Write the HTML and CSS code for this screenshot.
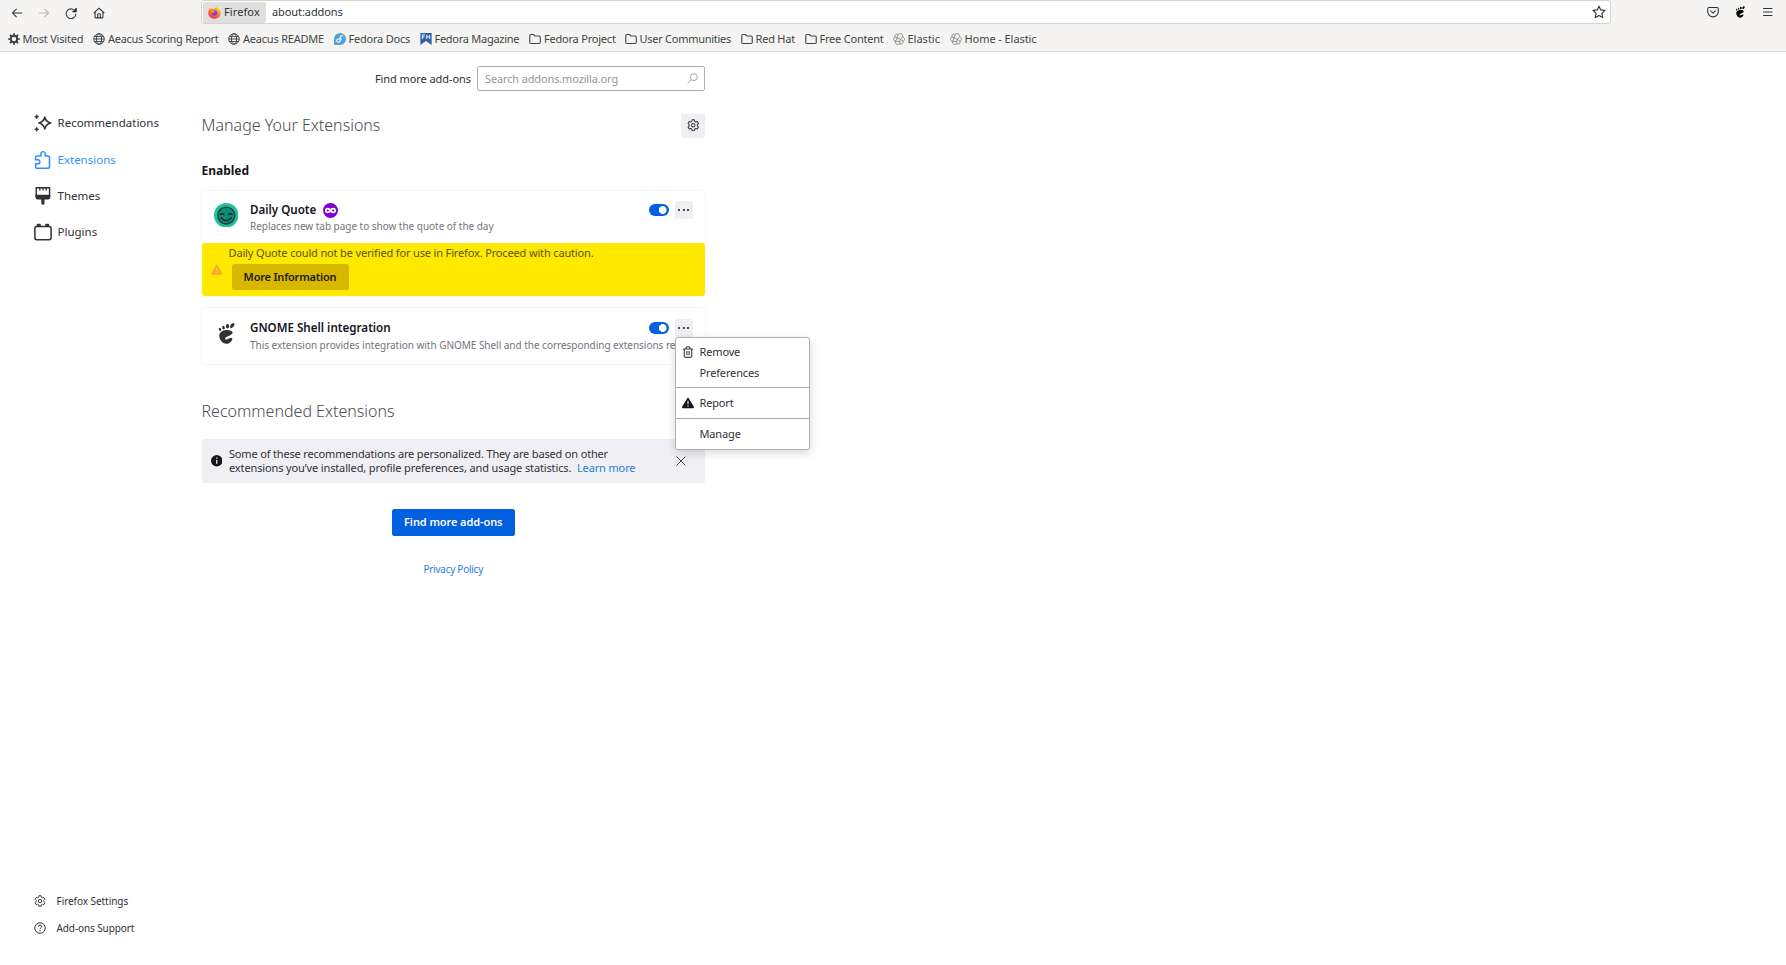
FILE: index.html
```html
<!DOCTYPE html>
<html lang="en">
<head>
<meta charset="utf-8">
<title>Add-ons Manager</title>
<link rel="stylesheet" href="styles.css">
</head>
<body>
<svg class="defs" width="0" height="0" aria-hidden="true">
  <symbol id="globe" viewBox="0 0 16 16"><g fill="none" stroke="currentColor" stroke-width="1.300"><circle cx="8" cy="8" r="7"/><ellipse cx="8" cy="8" rx="3.400" ry="7"/><path d="M1 8h14M2 4.600h12M2 11.400h12"/></g></symbol>
  <symbol id="folder" viewBox="0 0 16 16"><path d="M1 12.500v-9A1.500 1.500 0 0 1 2.500 2H6l2 2h5.500A1.500 1.500 0 0 1 15 5.500v7a1.500 1.500 0 0 1-1.500 1.500h-11A1.500 1.500 0 0 1 1 12.500z" fill="none" stroke="currentColor" stroke-width="1.500"/></symbol>
  <symbol id="elastic" viewBox="0 0 16 16"><g fill="none" stroke="currentColor" stroke-width="1"><path d="M2.700 5.400C1.900 2.200 4.600.4 6.800 2c2.700-2.500 6.600-.7 6.100 3.100 3 1.100 3.300 4.900.4 5.800.9 3.100-1.900 4.800-4.100 3.300-2.700 2.400-6.600.6-6.100-3.200C.2 9.900-.1 6.300 2.700 5.400z"/><path d="M6.800 2L5.900 6.600l3.900 1.900 3.100-3.400M2.700 5.400l3.200 1.200-2.800 4.400 6.100.2.600-2.700 3.500 2.400M9.200 11.200v3"/></g></symbol>
  <symbol id="gear" viewBox="0 0 16 16"><g fill="none" stroke="currentColor" stroke-width="1.300" stroke-linejoin="round"><path d="M6.600 1h2.800l.5 2 1.300.8 2-.6 1.500 2.500-1.500 1.500v1.600l1.500 1.500-1.500 2.500-2-.6-1.300.8-.5 2H6.600l-.5-2-1.300-.8-2 .6-1.500-2.500 1.500-1.500V7.200L1.300 5.700l1.500-2.500 2 .6L6.100 3z"/><circle cx="8" cy="8" r="2.200"/></g></symbol>
  <symbol id="foot" viewBox="0 0 18 21"><g fill="currentColor"><path d="M16.200.3c-3.300 0-3.900 5-2.100 5S19.400.3 16.200.3z"/><ellipse cx="10.500" cy="3.200" rx="1.600" ry="2.200" transform="rotate(12 10.500 3.200)"/><ellipse cx="6.500" cy="4.600" rx="1.300" ry="1.800" transform="rotate(-8 6.500 4.600)"/><ellipse cx="3" cy="6.400" rx="1.200" ry="1.600" transform="rotate(-24 3 6.400)"/><path d="M15.600 9.500c-.4-3.700-13.600-3.600-13.300 3.300.1 4.600 3.600 8 7.200 8 2.700 0 5.500-2.400 5.800-4.800.3-1.900-3.300-.9-4.500-.1-1.500 1-2.300.8-2.600 0-.8-2.300 7.800-3.600 7.400-6.400z"/></g></symbol>
  <symbol id="alert" viewBox="0 0 16 16"><path d="M7 1.600a1.200 1.200 0 0 1 2 0l6.800 11.500A1.200 1.200 0 0 1 14.800 15H1.200a1.200 1.200 0 0 1-1-1.900z" fill="currentColor"/><path d="M8 5v5M8 11.500V13" stroke="var(--mark)" stroke-width="1.300"/></symbol>
</svg>

<header class="chrome">
  <div class="toolbar">
    <div class="nav-buttons">
      <svg class="tool" viewBox="0 0 16 16"><path d="M15 8H2M7.500 2.500L2 8l5.500 5.500"/></svg>
      <svg class="tool dim" viewBox="0 0 16 16"><path d="M1 8h13M8.500 2.500L14 8l-5.500 5.500"/></svg>
      <svg class="tool" viewBox="0 0 16 16"><path d="M14 6.500A6.500 6.500 0 1 0 14.500 9M10 6h4.700V1.300"/><path d="M11 6.200h3.700V2.500z" fill="currentColor"/></svg>
      <svg class="tool" viewBox="0 0 16 16"><path d="M1 8l7-6.500L15 8M2.800 7v6.500A1 1 0 0 0 3.800 14.500h8.400a1 1 0 0 0 1-1V7M6.300 14.500V10a1 1 0 0 1 1-1h1.400a1 1 0 0 1 1 1v4.500"/></svg>
    </div>
    <div class="urlbar">
      <div class="identity">
        <svg class="fox" viewBox="0 0 16 16">
          <defs><linearGradient id="flame" x1=".8" y1="0" x2=".2" y2="1"><stop offset="0" stop-color="#ffd83a"/><stop offset=".45" stop-color="#ff8a1f"/><stop offset="1" stop-color="#f5215f"/></linearGradient></defs>
          <path d="M10 .3c1.500 1 2 2 2.300 3C13.800 4 15.800 6 15.700 9c-.2 4-3.500 6.800-7.700 6.800S.4 12.800.3 8.700C.2 6 1.200 4 2.600 2.600L3.400 4l1.200-1.700.9 1.500C7.500 3.500 9 2.500 10 .3z" fill="url(#flame)"/>
          <circle cx="8.200" cy="8.500" r="3.200" fill="#7a3fe0"/><path d="M4 6.500c2-1.500 4-.5 5 .8-1.500 0-2 .5-2.200 1.400C5.500 8.500 4.500 8 4 6.500z" fill="#ff9a2a"/>
        </svg>
        <span>Firefox</span>
      </div>
      <span class="url">about:addons</span>
      <svg class="star" viewBox="0 0 16 16"><path d="M8 1.300l2 4.300 4.800.6-3.500 3.300.9 4.700L8 11.900l-4.200 2.300.9-4.700L1.200 6.200 6 5.600z"/></svg>
    </div>
    <div class="tool-actions">
      <svg class="tool" viewBox="0 0 16 16"><path d="M2.500 2h11A1.500 1.500 0 0 1 15 3.500V7.500a7 7 0 0 1-14 0v-4A1.500 1.500 0 0 1 2.500 2zM4.500 6.200L8 9.500l3.500-3.300"/></svg>
      <svg class="tool-foot"><use href="#foot"/></svg>
      <svg class="tool menu-lines" viewBox="0 0 16 16"><path d="M1.500 3h13M1.500 8h13M1.500 13h13"/></svg>
    </div>
  </div>
  <nav class="bookmarks">
    <a class="w-visited"><svg viewBox="0 0 16 16"><circle cx="8" cy="8" r="4.200" fill="none" stroke="#2e3436" stroke-width="2.200"/><path d="M8 .3v3M8 12.700v3M.3 8h3M12.700 8h3M2.600 2.600l2 2M11.400 11.400l2 2M13.400 2.600l-2 2M4.600 11.400l-2 2" stroke="#2e3436" stroke-width="2.200"/></svg>Most Visited</a>
    <a class="w-report"><svg><use href="#globe"/></svg>Aeacus Scoring Report</a>
    <a class="w-readme"><svg><use href="#globe"/></svg>Aeacus README</a>
    <a class="w-docs"><svg viewBox="0 0 16 16"><path d="M8 0a8 8 0 1 1 0 16H1.500A1.500 1.500 0 0 1 0 14.500V8a8 8 0 0 1 8-8z" fill="#51a2da"/><path d="M12 4c-2-1-3.800.2-3.800 2v4.200c0 3-4.600 2.600-4.600-.2 0-1.200 1-2 2.200-2h4.700" fill="none" stroke="#fff" stroke-width="1.400"/></svg>Fedora Docs</a>
    <a class="w-magazine"><svg viewBox="0 0 16 16"><path d="M.5 0h15v16L8 10.500.5 16z" fill="#2f5fae"/><path d="M3.200 8V2.500h3.300M3.200 5.200h2.800M9 8V2.500M12.800 8V2.500M9 5.200h3.800" fill="none" stroke="#fff" stroke-width="1.200"/></svg>Fedora Magazine</a>
    <a class="w-project"><svg><use href="#folder"/></svg>Fedora Project</a>
    <a class="w-communities"><svg><use href="#folder"/></svg>User Communities</a>
    <a class="w-redhat"><svg><use href="#folder"/></svg>Red Hat</a>
    <a class="w-content"><svg><use href="#folder"/></svg>Free Content</a>
    <a class="w-elastic"><svg class="soft"><use href="#elastic"/></svg>Elastic</a>
    <a class="w-home"><svg class="soft"><use href="#elastic"/></svg>Home - Elastic</a>
  </nav>
</header>

<div class="page">
  <aside class="sidebar">
    <nav class="categories">
      <a><svg viewBox="0 0 20 20"><path d="M12 3.500c.8 4 2.200 5.400 6.500 6.500-4.300 1.100-5.700 2.500-6.500 6.500-.8-4-2.200-5.400-6.500-6.500C9.800 8.900 11.200 7.500 12 3.500z" fill="none" stroke="currentColor" stroke-width="1.800" stroke-linejoin="round"/><path d="M3 .5l.8 1.700 1.700.8-1.700.8L3 5.500l-.8-1.700L.5 3l1.700-.8zM3 14.500l.8 1.700 1.700.8-1.700.8-.8 1.700-.8-1.700L.5 17l1.700-.8z" fill="currentColor" stroke="currentColor" stroke-width=".5"/></svg>Recommendations</a>
      <a class="selected"><svg viewBox="0 0 20 20"><path d="M3 19.200h12.500A1.700 1.700 0 0 0 17.200 17.500V7.200a1.700 1.700 0 0 0-1.700-1.700h-3V3.300a2.400 2.400 0 0 0-4.800 0v2.200H3.400A1.700 1.700 0 0 0 1.700 7.200v2.500h2.500a2.300 2.300 0 0 1 0 4.600H1.700V18A1.200 1.200 0 0 0 3 19.200z" fill="none" stroke="currentColor" stroke-width="1.700" stroke-linejoin="round"/></svg>Extensions</a>
      <a><svg viewBox="0 0 20 20"><path d="M2.500.8h14.800v9.500H2.500z" fill="none" stroke="currentColor" stroke-width="1.600"/><path d="M1.700 8.500h16.400v3.300a2 2 0 0 1-2 2h-4.400V18a1.800 1.800 0 0 1-3.600 0v-4.200H3.700a2 2 0 0 1-2-2z" fill="currentColor"/><path d="M6.500 1v3M10 1v2.500M13.500 1v3" stroke="currentColor" stroke-width="1.500"/></svg>Themes</a>
      <a><svg viewBox="0 0 20 20"><rect x="1" y="4" width="18" height="14.500" rx="2" fill="none" stroke="currentColor" stroke-width="1.700"/><path d="M3 4V2a1.300 1.300 0 0 1 1.300-1.300h2A1.300 1.300 0 0 1 7.600 2v2zM12.400 4V2a1.300 1.300 0 0 1 1.300-1.300h2A1.300 1.300 0 0 1 17 2v2z" fill="currentColor"/></svg>Plugins</a>
    </nav>
    <nav class="footer-links">
      <a><svg><use href="#gear"/></svg>Firefox Settings</a>
      <a class="support"><svg viewBox="0 0 16 16"><circle cx="8" cy="8" r="7" fill="none" stroke="currentColor" stroke-width="1.300"/><path d="M5.800 6.300c0-3 4.500-2.800 4.500-.2C10.300 7.700 8 7.800 8 9.600M8 11v1.500" fill="none" stroke="currentColor" stroke-width="1.300"/></svg>Add-ons Support</a>
    </nav>
  </aside>

  <main class="content">
    <div class="search-row">
      <label>Find more add-ons</label>
      <div class="search"><span>Search addons.mozilla.org</span><svg viewBox="0 0 16 16"><circle cx="9.800" cy="6.200" r="5" fill="none" stroke="currentColor" stroke-width="1.200"/><path d="M6 10l-5 5" stroke="currentColor" stroke-width="1.200"/></svg></div>
    </div>
    <div class="heading-row"><h1>Manage Your Extensions</h1><button class="gear"><svg><use href="#gear"/></svg></button></div>
    <h2>Enabled</h2>

    <article class="card">
      <div class="card-body">
        <svg class="addon-icon" viewBox="0 0 24 24"><circle cx="12" cy="12" r="12" fill="#20bf9b"/><circle cx="12" cy="12.300" r="8.300" fill="#128a73" stroke="#123c39" stroke-width="1.300"/><path d="M6 11.300q1.800-1.500 3.800 0M14 11.300q2-1.500 3.800 0M7 14.500q5 5.500 10 0" fill="none" stroke="#0b2b2a" stroke-width="1.300" stroke-linecap="round"/></svg>
        <div class="info">
          <h3>Daily Quote <svg class="badge" viewBox="0 0 16 16"><circle cx="8" cy="8" r="8" fill="#8000d7"/><path d="M8 8C6.500 5.600 3 5.200 3 8s3.500 2.400 5 0c1.500-2.400 5-2.800 5 0s-3.500 2.400-5 0z" fill="none" stroke="#fff" stroke-width="1.900"/></svg></h3>
          <p>Replaces new tab page to show the quote of the day</p>
        </div>
        <div class="controls"><span class="toggle"></span><button class="more"><i></i><i></i><i></i></button></div>
      </div>
      <div class="warning">
        <svg><use href="#alert"/></svg>
        <div><p>Daily Quote could not be verified for use in Firefox. Proceed with caution.</p><button>More Information</button></div>
      </div>
    </article>

    <article class="card second">
      <div class="card-body">
        <svg class="addon-icon gnome"><use href="#foot"/></svg>
        <div class="info">
          <h3>GNOME Shell integration</h3>
          <p>This extension provides integration with GNOME Shell and the corresponding extensions re</p>
        </div>
        <div class="controls"><span class="toggle"></span>
          <div class="more-anchor">
            <button class="more"><i></i><i></i><i></i></button>
            <div class="menu">
              <div class="group"><a><svg viewBox="0 0 16 16"><path d="M1.500 4h13M5.500 4V2.300A1.300 1.300 0 0 1 6.800 1h2.400a1.300 1.300 0 0 1 1.300 1.300V4M3 4v9.500A1.500 1.500 0 0 0 4.500 15h7a1.500 1.500 0 0 0 1.500-1.500V4M6.500 6.800v5.500M9.500 6.800v5.500" fill="none" stroke="currentColor" stroke-width="1.400"/></svg>Remove</a><a class="plain">Preferences</a></div>
              <div class="group"><a class="report"><svg><use href="#alert"/></svg>Report</a></div>
              <div class="group"><a class="plain">Manage</a></div>
            </div>
          </div>
        </div>
      </div>
    </article>

    <h1 class="recommended">Recommended Extensions</h1>
    <div class="notice">
      <svg viewBox="0 0 16 16"><circle cx="8" cy="8" r="8" fill="#15141a"/><path d="M8 3.500v1.800M8 6.800V12" stroke="#fff" stroke-width="1.600"/></svg>
      <p>Some of these recommendations are personalized. They are based on other<br><span>extensions you’ve installed, profile preferences, and usage statistics.</span> <a>Learn more</a></p>
      <svg class="close" viewBox="0 0 10 10"><path d="M.5.5l9 9M9.500.5l-9 9" stroke="#4a4a52" stroke-width="1"/></svg>
    </div>
    <button class="primary">Find more add-ons</button>
    <a class="privacy">Privacy Policy</a>
  </main>
</div>
</body>
</html>
```
FILE: styles.css
```css
* { box-sizing: border-box; margin: 0; padding: 0; }
body {
  height: 965px;
  display: flex;
  flex-direction: column;
  overflow: hidden;
  background: #fff;
  color: #303036;
  font: 11px/14px "Noto Sans", "Open Sans", sans-serif;
  letter-spacing: -.15px;
  white-space: nowrap;
}
svg { display: block; flex: none; }
.defs { position: absolute; }
button { border: 0; font: inherit; letter-spacing: inherit; color: inherit; }

/* Browser chrome */
.chrome {
  height: 52px;
  flex: none;
  background: #f5f4f2;
  border-bottom: 1px solid #dddbd8;
  color: #2e3436;
}
.toolbar { height: 25px; display: flex; }
.nav-buttons { width: 201px; display: flex; gap: 15.300px; padding: 6.500px 0 0 10.700px; }
.tool { width: 12px; height: 12px; fill: none; stroke: currentColor; stroke-width: 1.400; }
.dim { color: #b5b6b5; }
.urlbar {
  width: 1410px;
  height: 24px;
  display: flex;
  align-items: center;
  background: #fff;
  border: 1px solid #d8d3cd;
  border-radius: 3px;
  padding: 0 4px 0 1px;
}
.identity {
  width: 63px;
  height: 21px;
  display: flex;
  align-items: center;
  gap: 3px;
  padding-left: 5px;
  background: #dfdfdf;
  border-radius: 2px;
  letter-spacing: .1px;
}
.fox { width: 13px; height: 13px; }
.url { margin-left: 6px; flex: 1; letter-spacing: -.08px; }
.star { width: 14px; height: 14px; fill: none; stroke: currentColor; stroke-width: 1.300; stroke-linejoin: round; }
.tool-actions { display: flex; padding: 6px 0 0 96px; }
.tool-foot { width: 10px; height: 12px; margin-left: 16px; color: #000; }
.menu-lines { margin-left: 17px; width: 11.500px; height: 12px; }
.bookmarks { display: flex; padding: 6px 0 0 7.500px; color: #3f4648; letter-spacing: -.21px; }
.bookmarks a { display: flex; align-items: center; gap: 3px; height: 16px; }
.bookmarks svg { width: 12px; height: 12px; }
.bookmarks .soft { color: #6c7274; }
.w-visited { width: 85.500px; }
.w-report { width: 135px; letter-spacing: -.28px; }
.w-readme { width: 105.500px; }
.w-docs { width: 86px; }
.w-magazine { width: 109.500px; letter-spacing: -.27px; }
.w-project { width: 95.500px; }
.w-communities { width: 116px; letter-spacing: -.27px; }
.w-redhat { width: 64px; }
.w-content { width: 88px; }
.w-elastic { width: 57px; letter-spacing: 0; }
.w-home { letter-spacing: -.07px; }

/* Page */
.page { flex: 1; display: flex; }
.sidebar { width: 201.500px; display: flex; flex-direction: column; justify-content: space-between; padding: 53px 0 23px 33.500px; }
.categories a { height: 36.400px; display: flex; align-items: center; gap: 6px; font-size: 11.500px; letter-spacing: 0; }
.categories svg { width: 18px; height: 18px; }
.categories .selected { color: #3492f5; }
.footer-links a { height: 27.500px; display: flex; align-items: center; gap: 10.500px; padding-left: .5px; font-size: 10px; letter-spacing: -.06px; }
.footer-links .support { letter-spacing: -.1px; }
.footer-links svg { width: 12px; height: 12px; }

.content { width: 503.500px; display: flex; flex-direction: column; }
.search-row { display: flex; align-items: center; justify-content: flex-end; gap: 6px; padding-top: 14px; letter-spacing: -.07px; }
.search {
  width: 228px;
  height: 25px;
  display: flex;
  align-items: center;
  justify-content: space-between;
  padding: 0 6px 0 7px;
  border: 1px solid #b0b0b2;
  border-radius: 2px;
  color: #97979b;
  letter-spacing: -.14px;
}
.search svg { width: 11px; height: 11px; }
.heading-row { display: flex; align-items: center; justify-content: space-between; margin-top: 22.500px; }
h1 { font-size: 16px; line-height: 22px; font-weight: 300; letter-spacing: 0; color: #4b4b52; }
.heading-row h1 { margin-top: -2px; }
.gear { width: 24px; height: 24px; display: grid; place-items: center; background: #f0f0f4; border-radius: 2px; }
.gear svg { width: 12.500px; height: 12.500px; }
h2 { font-size: 12px; line-height: 16px; font-weight: 700; letter-spacing: 0; color: #15141a; margin: 25px 0 12px; }

.card { border-radius: 3px; box-shadow: 0 0 2px rgba(0, 0, 0, .12); }
.card-body { height: 52.500px; display: flex; padding: 10.500px 12px 0; }
.addon-icon { width: 24.500px; height: 24.500px; margin-top: 1.500px; }
.gnome { width: 18px; height: 21px; margin: 4px 3px 0 3.500px; }
.info { width: 398.500px; margin-left: 12px; }
h3 { height: 18px; display: flex; align-items: center; gap: 7px; font-size: 11.600px; font-weight: 600; letter-spacing: 0; color: #15141a; }
.badge { width: 15px; height: 15px; }
.info p { font-size: 10px; letter-spacing: -.03px; color: #73737d; }
.second .info p { margin-top: 1px; }
.controls { height: 18px; display: flex; align-items: center; gap: 6px; }
.toggle { width: 20px; height: 12px; border-radius: 6px; background: radial-gradient(circle at 13.700px 6px, #fff 3.600px, #0060df 4.200px); }
.more { width: 18px; height: 18px; display: flex; align-items: center; justify-content: center; gap: 2.500px; background: #f0f0f4; border-radius: 2px; }
.more i { width: 2px; height: 2px; border-radius: 1px; background: #15141a; }
.warning {
  height: 53px;
  display: flex;
  align-items: center;
  gap: 6.500px;
  padding-left: 9px;
  background: #ffe900;
  border-radius: 3px;
  color: #5b5313;
}
.warning svg { width: 11.500px; height: 11.500px; color: #ffa436; --mark: #ffe900; }
.warning button { width: 117px; height: 26px; margin: 3.500px 0 3px 3px; background: #d8b700; border-radius: 2.500px; color: #1c1a10; font-weight: 600; letter-spacing: -.2px; }
.second { height: 56px; margin-top: 12px; }

/* Options menu, laid over the card */
.more-anchor { position: relative; }
.menu {
  position: absolute;
  top: 18px;
  left: 0;
  width: 135px;
  background: #fff;
  border: 1px solid #b0b0b2;
  border-radius: 3px;
  box-shadow: 0 3px 10px rgba(0, 0, 0, .16);
}
.group { padding: 4.600px 0; }
.group + .group { border-top: 1px solid #b0b0b2; }
.menu a { height: 20.400px; display: flex; align-items: center; gap: 6px; padding-left: 6px; }
.menu .plain { padding-left: 24px; }
.menu svg { width: 12px; height: 12px; --mark: #fff; }
.menu .report { color: #303036; }
.menu .report svg { color: #15141a; }

.recommended { margin: 36px 0 17px; }
.notice { height: 44px; display: flex; align-items: center; padding: 0 19px 0 9px; background: #f0f0f4; border-radius: 3px; }
.notice > svg { width: 11.500px; height: 11.500px; }
.notice p { flex: 1; margin-left: 7px; line-height: 14.500px; letter-spacing: -.17px; }
.notice span { letter-spacing: -.13px; }
.notice a { margin-left: 3px; letter-spacing: -.14px; color: #2a7de1; }
.notice .close { width: 10px; height: 10px; }
.primary { align-self: center; width: 123px; height: 26.500px; margin-top: 26px; background: #0060df; border-radius: 2.500px; color: #fbfbfe; font-weight: 600; letter-spacing: -.09px; }
.privacy { align-self: center; margin-top: 26.500px; font-size: 10px; letter-spacing: -.26px; color: #2a7de1; }
```
